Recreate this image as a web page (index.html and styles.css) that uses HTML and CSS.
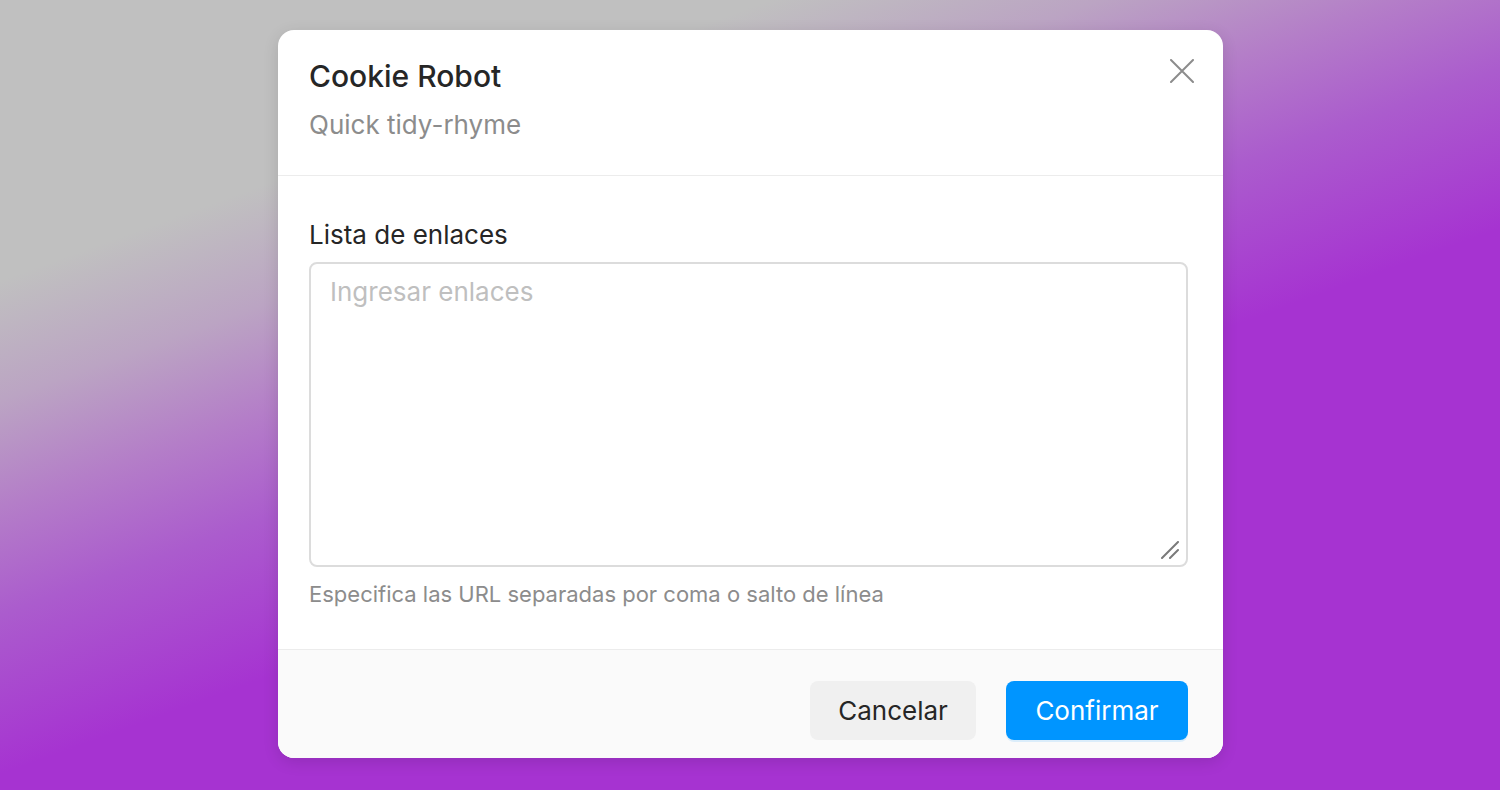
FILE: index.html
```html
<!DOCTYPE html>
<html lang="es">
<head>
    <meta charset="UTF-8">
    <meta name="viewport" content="width=device-width, initial-scale=1.0">
    <title>Cookie Robot</title>
    <link rel="stylesheet" href="styles.css">
</head>
<body>
    <div class="modal">
        <header class="modal-header">
            <h1 class="modal-title">Cookie Robot</h1>
            <div class="modal-subtitle">Quick tidy-rhyme</div>
            <button class="close-button" aria-label="Cerrar">
                <svg width="24" height="24" viewBox="0 0 24 24" fill="none">
                    <path d="M1 1L23 23M23 1L1 23" stroke="currentColor" stroke-width="2" stroke-linecap="round"/>
                </svg>
            </button>
        </header>

        <div class="modal-body">
            <label class="field-label" for="links">Lista de enlaces</label>
            <div class="field-wrap">
                <textarea id="links" class="field-input" placeholder="Ingresar enlaces"></textarea>
                <svg class="resize-handle" width="18" height="18" viewBox="0 0 18 18" fill="none">
                    <path d="M1 17L17 1M9 17L17 9" stroke="currentColor" stroke-width="2" stroke-linecap="round"/>
                </svg>
            </div>
            <div class="field-help">Especifica las URL separadas por coma o salto de línea</div>
        </div>

        <footer class="modal-footer">
            <button class="btn btn-default">Cancelar</button>
            <button class="btn btn-primary">Confirmar</button>
        </footer>
    </div>
</body>
</html>
```

FILE: styles.css
```css
:root {
    --text-color: #262626;
    --muted-color: #8c8c8c;
    --placeholder-color: #bfbfbf;
    --border-color: #ececec;
    --input-border: #dcdcdc;
    --primary-color: #0095ff;
}

* {
    box-sizing: border-box;
}

body {
    margin: 0;
    height: 790px;
    padding-top: 30px;
    display: flex;
    justify-content: center;
    align-items: flex-start;
    font-family: Inter, "Noto Sans", sans-serif;
    color: var(--text-color);
    background: linear-gradient(160deg, #c0c0c0 21%, #bba4c3 30%, #b47ec8 38%, #ab5ccd 46%, #a633d1 58%);
    overflow: hidden;
}

.modal {
    width: 945px;
    margin-left: 1px;
    background-color: white;
    border-radius: 16px;
    box-shadow: 0 4px 16px rgba(0, 0, 0, 0.12);
    overflow: hidden;
}

.modal-header {
    position: relative;
    padding: 27px 35px 33px 31px;
    border-bottom: 1px solid var(--border-color);
}

.modal-title {
    margin: 0;
    font-size: 30px;
    line-height: 38px;
    font-weight: 500;
}

.modal-subtitle {
    margin-top: 13px;
    font-size: 26px;
    line-height: 34px;
    color: var(--muted-color);
}

.close-button {
    position: absolute;
    top: 29px;
    right: 29px;
    width: 24px;
    height: 24px;
    padding: 0;
    border: none;
    background: none;
    color: #8c8c8c;
    cursor: pointer;
}

.close-button svg {
    display: block;
}

.modal-body {
    display: flex;
    flex-direction: column;
    padding: 42px 35px 41px 31px;
}

.field-label {
    font-size: 26px;
    line-height: 34px;
}

.field-wrap {
    position: relative;
    margin-top: 10px;
}

.field-input {
    display: block;
    width: 100%;
    height: 305px;
    padding: 11px 19px;
    border: 2px solid var(--input-border);
    border-radius: 8px;
    font-family: inherit;
    font-size: 26px;
    line-height: 34px;
    color: var(--text-color);
    resize: none;
    outline: none;
}

.field-input::placeholder {
    color: var(--placeholder-color);
}

.resize-handle {
    position: absolute;
    right: 9px;
    bottom: 8px;
    color: #7a7a7a;
    pointer-events: none;
}

.field-help {
    margin-top: 13px;
    font-size: 22px;
    line-height: 28px;
    color: var(--muted-color);
}

.modal-footer {
    display: flex;
    justify-content: flex-end;
    gap: 30px;
    padding: 31px 35px 18px 31px;
    background-color: #fafafa;
    border-top: 1px solid var(--border-color);
}

.btn {
    height: 59px;
    border: none;
    border-radius: 8px;
    font-family: inherit;
    font-size: 26px;
    cursor: pointer;
}

.btn-default {
    width: 166px;
    background-color: #f0f0f0;
    color: var(--text-color);
}

.btn-primary {
    width: 182px;
    background-color: var(--primary-color);
    color: white;
    box-shadow: 0 2px 0 rgba(0, 149, 255, 0.12);
}
```
